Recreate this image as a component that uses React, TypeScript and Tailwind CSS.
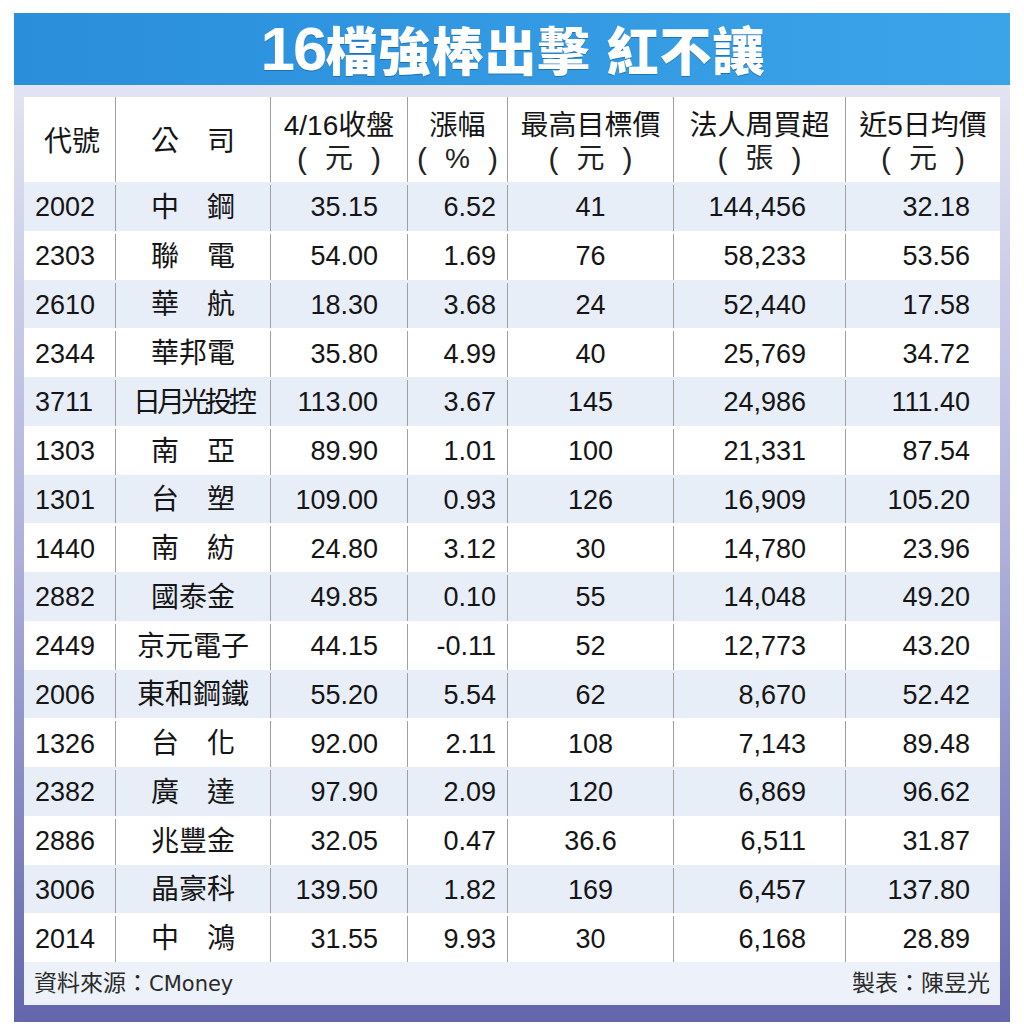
import React from "react";

const rows = [
  ["2002", "中　鋼", "35.15", "6.52", "41", "144,456", "32.18"],
  ["2303", "聯　電", "54.00", "1.69", "76", "58,233", "53.56"],
  ["2610", "華　航", "18.30", "3.68", "24", "52,440", "17.58"],
  ["2344", "華邦電", "35.80", "4.99", "40", "25,769", "34.72"],
  ["3711", "日月光投控", "113.00", "3.67", "145", "24,986", "111.40"],
  ["1303", "南　亞", "89.90", "1.01", "100", "21,331", "87.54"],
  ["1301", "台　塑", "109.00", "0.93", "126", "16,909", "105.20"],
  ["1440", "南　紡", "24.80", "3.12", "30", "14,780", "23.96"],
  ["2882", "國泰金", "49.85", "0.10", "55", "14,048", "49.20"],
  ["2449", "京元電子", "44.15", "-0.11", "52", "12,773", "43.20"],
  ["2006", "東和鋼鐵", "55.20", "5.54", "62", "8,670", "52.42"],
  ["1326", "台　化", "92.00", "2.11", "108", "7,143", "89.48"],
  ["2382", "廣　達", "97.90", "2.09", "120", "6,869", "96.62"],
  ["2886", "兆豐金", "32.05", "0.47", "36.6", "6,511", "31.87"],
  ["3006", "晶豪科", "139.50", "1.82", "169", "6,457", "137.80"],
  ["2014", "中　鴻", "31.55", "9.93", "30", "6,168", "28.89"],
];

// [first line, unit in parentheses]
const headers: [string, string | null][] = [
  ["代號", null],
  ["公　司", null],
  ["4/16收盤", "元"],
  ["漲幅", "%"],
  ["最高目標價", "元"],
  ["法人周買超", "張"],
  ["近5日均價", "元"],
];

const grid = "grid grid-cols-[91px_155px_137px_100px_166px_172px_155px]";

export default function App() {
  return (
    <div className="w-[1024px] h-[1032px] bg-white pt-[13px] pl-[14px] font-['Liberation_Sans','Noto_Sans_CJK_TC',sans-serif] text-[#151515]">
      <div className="w-[996px]">
        {/* title bar */}
        <div className="h-[72px] bg-gradient-to-r from-[#2a8edb] to-[#3ba4e9] flex items-center justify-center text-white font-bold pl-[2px]">
          <span className="text-[62px] leading-none tracking-[-2px] font-['Liberation_Sans',sans-serif] drop-shadow-[0_1px_0_rgba(0,60,120,0.4)]">16</span>
          <span className="text-[52px] leading-none tracking-[1px] font-['Noto_Sans_CJK_TC',sans-serif] font-black drop-shadow-[0_1px_0_rgba(0,60,120,0.4)]">
            檔強棒出擊
          </span>
          <span className="ml-[16px] text-[52px] leading-none tracking-[1px] font-['Noto_Sans_CJK_TC',sans-serif] font-black drop-shadow-[0_1px_0_rgba(0,60,120,0.4)]">
            紅不讓
          </span>
        </div>

        {/* frame */}
        <div className="bg-gradient-to-b from-[#e2e4f2] via-[#aeb0da] to-[#6466ac] pt-[12px] pl-[10px] pr-[10px] pb-[17px]">
          <div className="w-[976px]">
            <div className={`${grid} h-[85px] bg-white`}>
              {headers.map(([label, unit], i) => (
                <div
                  key={i}
                  className={`flex flex-col items-center justify-center pt-[4px] text-[28px] leading-[33px] ${i > 0 ? "border-l border-[#a0a0a0]" : ""}`}
                >
                  <span className={i === 0 ? "pl-[5px]" : ""}>{label}</span>
                  {unit && (
                    <span className="flex items-center gap-[18px] text-[#222]">
                      <span className="text-[30px]">(</span>
                      <span>{unit}</span>
                      <span className="text-[30px]">)</span>
                    </span>
                  )}
                </div>
              ))}
            </div>

            {rows.map((r, ri) => (
              <div key={ri} className={`${grid} h-[48.75px] pt-[3px] text-[27px] leading-none ${ri % 2 === 0 ? "bg-[#e8eef8]" : "bg-white"}`}>
                <div className="flex items-center pl-[11px]">{r[0]}</div>
                <div className="flex items-center justify-center border-l border-[#a0a0a0]">
                  <span className={`text-[28px] ${r[1].length === 5 ? "tracking-[-4px]" : ""}`}>{r[1]}</span>
                </div>
                <div className="flex items-center justify-end pr-[29px] border-l border-[#a0a0a0]">{r[2]}</div>
                <div className="flex items-center justify-end pr-[11px] border-l border-[#a0a0a0]">{r[3]}</div>
                <div className="flex items-center justify-center border-l border-[#a0a0a0]">{r[4]}</div>
                <div className="flex items-center justify-end pr-[39px] border-l border-[#a0a0a0]">{r[5]}</div>
                <div className="flex items-center justify-end pr-[30px] border-l border-[#a0a0a0]">{r[6]}</div>
              </div>
            ))}

            <div className="h-[43px] bg-[#edf1f9] flex items-center justify-between pl-[10px] pr-[10px] text-[23px] text-[#2a2a2a]">
              <span>
                資料來源：<span className="font-['DejaVu_Sans',sans-serif] text-[21px]">CMoney</span>
              </span>
              <span>製表：陳昱光</span>
            </div>
          </div>
        </div>
      </div>
    </div>
  );
}
